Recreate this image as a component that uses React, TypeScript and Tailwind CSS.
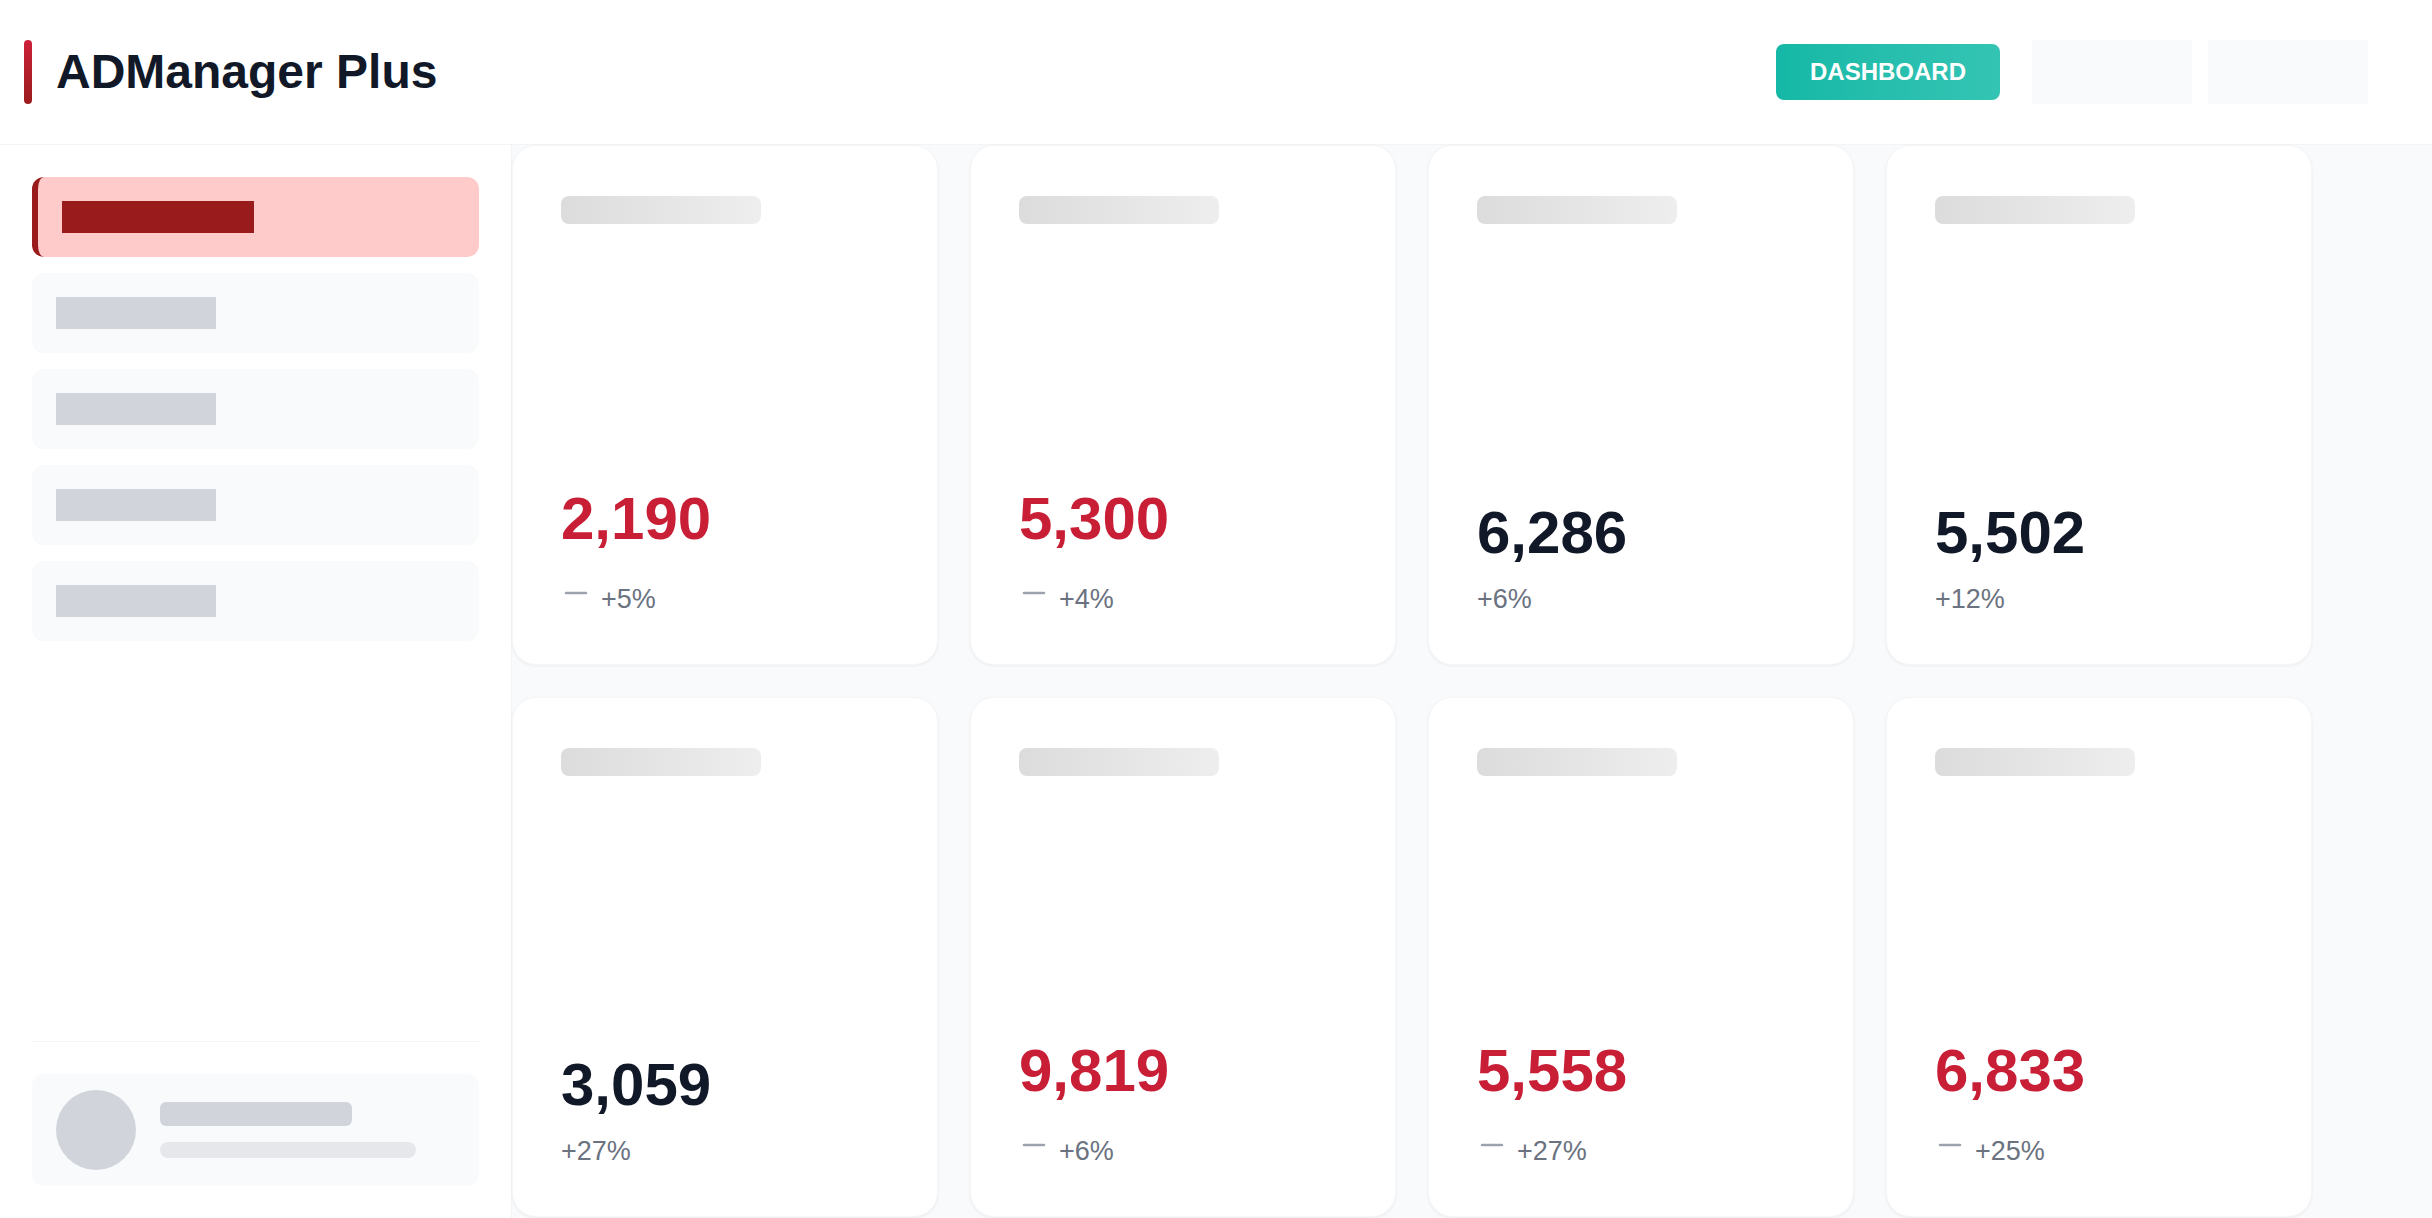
import React from 'react';

type Stat = {
  value: string;
  change: string;
  alert: boolean;
};

const stats: Stat[] = [
  { value: '2,190', change: '+5%', alert: true },
  { value: '5,300', change: '+4%', alert: true },
  { value: '6,286', change: '+6%', alert: false },
  { value: '5,502', change: '+12%', alert: false },
  { value: '3,059', change: '+27%', alert: false },
  { value: '9,819', change: '+6%', alert: true },
  { value: '5,558', change: '+27%', alert: true },
  { value: '6,833', change: '+25%', alert: true },
];

function Header() {
  return (
    <header className="h-[145px] shrink-0 flex items-center justify-between pl-6 pr-16 bg-white border-b border-gray-100">
      <div className="flex items-center gap-6">
        <div className="w-2 h-16 rounded-full bg-linear-to-b from-[#cc2139] to-[#9b1c1c]" />
        <h1 className="text-5xl font-bold text-[#111827]">ADManager Plus</h1>
      </div>
      <div className="flex items-center gap-8">
        <button className="h-14 px-[34px] rounded-lg bg-linear-to-r from-[#14b8a6] to-[#34c4b4] text-white text-2xl font-bold">
          DASHBOARD
        </button>
        <div className="flex items-center gap-4">
          <div className="w-40 h-16 bg-[#f9fafb]" />
          <div className="w-40 h-16 bg-[#f9fafb]" />
        </div>
      </div>
    </header>
  );
}

function Sidebar() {
  return (
    <aside className="w-[512px] shrink-0 flex flex-col p-8 bg-white border-r border-[#f3f4f6]">
      <nav className="flex flex-col gap-4">
        <div className="h-20 flex items-center px-6 rounded-xl bg-[#fecaca] border-l-[6px] border-[#991b1b]">
          <div className="w-48 h-8 bg-[#991b1b]" />
        </div>
        {[0, 1, 2, 3].map((i) => (
          <div key={i} className="h-20 flex items-center px-6 rounded-xl bg-[#f9fafb]">
            <div className="w-40 h-8 bg-[#d1d5db]" />
          </div>
        ))}
      </nav>
      <div className="mt-auto border-t border-[#f3f4f6] pt-8">
        <div className="flex items-center gap-6 px-6 py-4 rounded-xl bg-[#f9fafb]">
          <div className="w-20 h-20 rounded-full bg-[#d1d5db]" />
          <div className="flex flex-col gap-4">
            <div className="w-48 h-6 rounded-md bg-[#d1d5db]" />
            <div className="w-64 h-4 rounded-full bg-[#e5e7eb]" />
          </div>
        </div>
      </div>
    </aside>
  );
}

function DashIcon() {
  return (
    <svg width="28" height="48" viewBox="0 0 28 48" className="shrink-0">
      <line x1="5" y1="25" x2="25" y2="25" stroke="#9ca3af" strokeWidth="2.5" strokeLinecap="round" />
    </svg>
  );
}

function StatCard({ stat }: { stat: Stat }) {
  return (
    <div className="h-[520px] flex flex-col justify-between p-12 bg-white rounded-3xl border border-[#f5f6f8] shadow-[0_1px_3px_rgba(0,0,0,0.06)]">
      <div className="w-[200px] h-7 mt-0.5 rounded-lg bg-linear-to-r from-[#dcdcdc] to-[#eeeeee]" />
      <div>
        <div className={`text-[60px] leading-none font-bold ${stat.alert ? 'text-[#c81e36]' : 'text-[#111827]'}`}>
          {stat.value}
        </div>
        <div className="mt-[19px] flex items-end gap-3">
          {stat.alert && <DashIcon />}
          <span className="text-[27px] leading-[34px] text-[#6b7280]">{stat.change}</span>
        </div>
      </div>
    </div>
  );
}

export default function App() {
  return (
    <div className="h-screen flex flex-col overflow-hidden font-['Liberation_Sans',Arial,sans-serif]">
      <Header />
      <div className="flex flex-1 min-h-0">
        <Sidebar />
        <main className="flex-1 bg-[#f9fafb]">
          <div className="grid grid-cols-[repeat(4,426px)] grid-rows-[520px_520px] gap-8">
            {stats.map((s, i) => (
              <StatCard key={i} stat={s} />
            ))}
          </div>
        </main>
      </div>
    </div>
  );
}
